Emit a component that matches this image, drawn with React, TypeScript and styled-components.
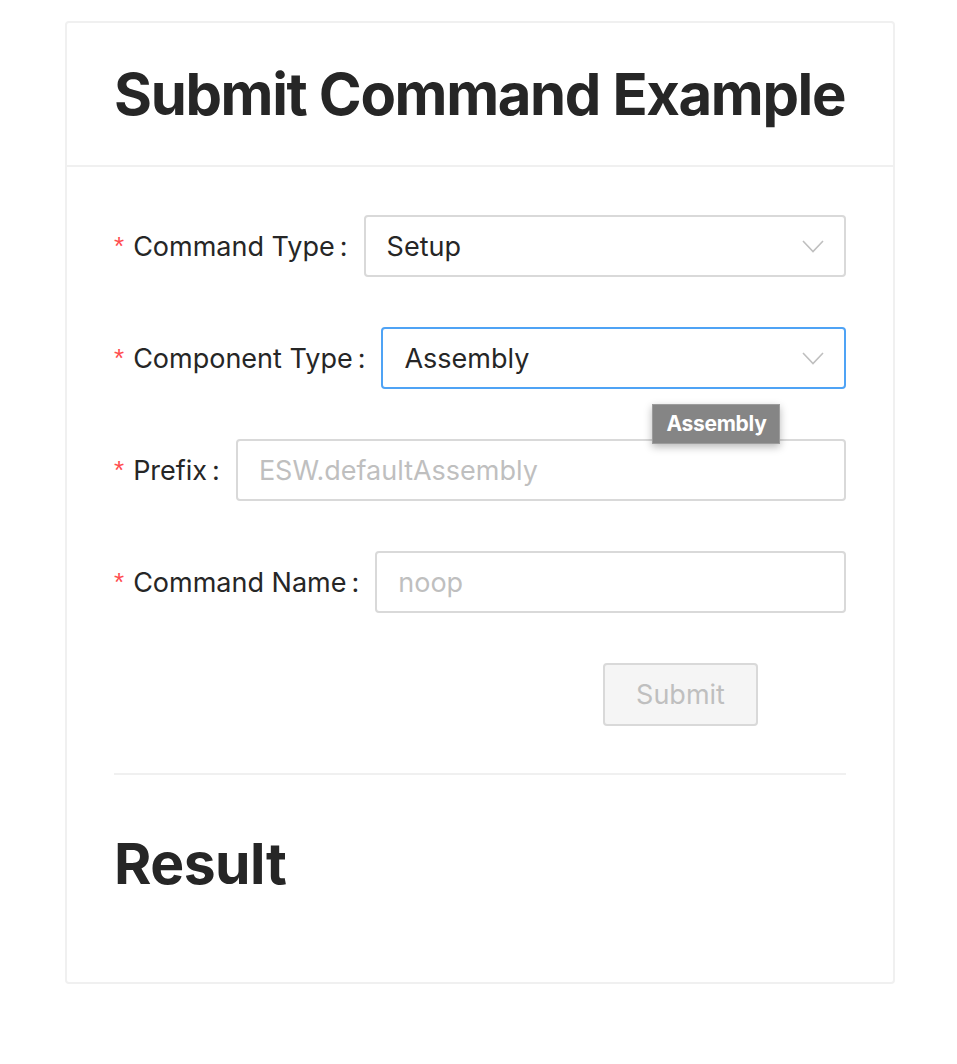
import styled, { createGlobalStyle } from "styled-components";

const GlobalStyle = createGlobalStyle`
  body {
    margin: 0;
    background: #fff;
    font-family: Inter, "Liberation Sans", sans-serif;
    color: #262626;
  }
`;

const StyledPage = styled.div`
  padding: 21px 0 40px 65px;
`;

const StyledCard = styled.div`
  width: 830px;
  box-sizing: border-box;
  border: 2px solid #f0f0f0;
  border-radius: 4px;
  background: #fff;
`;

const StyledCardHeader = styled.div`
  height: 144px;
  box-sizing: border-box;
  border-bottom: 2px solid #f0f0f0;
  padding: 0 47px;
  display: flex;
  align-items: center;
`;

const StyledTitle = styled.h1`
  margin: 0;
  font-size: 58px;
  font-weight: 700;
  letter-spacing: -1.35px;
  white-space: nowrap;
  color: #262626;
`;

const StyledCardBody = styled.div`
  padding: 48px 47px 47px;
`;

const StyledFormItem = styled.div`
  display: flex;
  align-items: center;
  height: 62px;
  margin-bottom: 50px;
`;

const StyledLabel = styled.label`
  display: flex;
  align-items: center;
  font-size: 27px;
  white-space: nowrap;
  color: #262626;

  &::before {
    content: "*";
    color: #ff4d4f;
    font-size: 26px;
    margin-right: 9px;
    font-family: "Liberation Sans", sans-serif;
  }

  &::after {
    content: ":";
    margin: 0 16px 0 5px;
  }
`;

const StyledControl = styled.div<{ $focused?: boolean }>`
  position: relative;
  flex: 1;
  height: 62px;
  box-sizing: border-box;
  border: 2px solid ${(p) => (p.$focused ? "#4fa3f5" : "#d9d9d9")};
  border-radius: 4px;
  display: flex;
  align-items: center;
  padding: 0 20px 0 21px;
  font-size: 27px;
  background: #fff;
`;

const StyledValue = styled.span<{ $placeholder?: boolean }>`
  flex: 1;
  color: ${(p) => (p.$placeholder ? "#bfbfbf" : "#262626")};
`;

const StyledArrow = styled.svg`
  width: 22px;
  height: 14px;
`;

const StyledTooltip = styled.div`
  position: absolute;
  left: 269px;
  top: 75px;
  padding: 6px 13px 7px;
  background: #858585;
  border: 1px solid #9c9c9c;
  color: #fff;
  font-size: 21px;
  font-weight: 700;
  letter-spacing: -0.3px;
  box-shadow: 0 3px 8px rgba(0, 0, 0, 0.28);
  z-index: 2;
`;

const StyledButtonRow = styled.div`
  display: flex;
  justify-content: flex-end;
  padding-right: 88px;
`;

const StyledButton = styled.button`
  width: 155px;
  height: 63px;
  box-sizing: border-box;
  border: 2px solid #d9d9d9;
  border-radius: 4px;
  background: #f5f5f5;
  color: #bfbfbf;
  font-family: inherit;
  font-size: 27px;
  cursor: not-allowed;
`;

const StyledDivider = styled.hr`
  border: none;
  border-top: 2px solid #f0f0f0;
  margin: 47px 0 51px;
`;

const StyledResult = styled.h2`
  margin: 0 0 32px;
  font-size: 57px;
  line-height: 1.35;
  font-weight: 700;
  letter-spacing: -0.5px;
  color: #262626;
`;

function Arrow() {
  return (
    <StyledArrow viewBox="0 0 22 14" fill="none">
      <polyline points="1,2 11,12.5 21,2" stroke="#bfbfbf" strokeWidth="1.6" />
    </StyledArrow>
  );
}

type Field = {
  label: string;
  value: string;
  placeholder?: boolean;
  select?: boolean;
  focused?: boolean;
  tooltip?: string;
};

const fields: Field[] = [
  { label: "Command Type", value: "Setup", select: true },
  { label: "Component Type", value: "Assembly", select: true, focused: true, tooltip: "Assembly" },
  { label: "Prefix", value: "ESW.defaultAssembly", placeholder: true },
  { label: "Command Name", value: "noop", placeholder: true },
];

export default function App() {
  return (
    <>
      <GlobalStyle />
      <StyledPage>
        <StyledCard>
          <StyledCardHeader>
            <StyledTitle>Submit Command Example</StyledTitle>
          </StyledCardHeader>
          <StyledCardBody>
            {fields.map((f) => (
              <StyledFormItem key={f.label}>
                <StyledLabel>{f.label}</StyledLabel>
                <StyledControl $focused={f.focused}>
                  <StyledValue $placeholder={f.placeholder}>{f.value}</StyledValue>
                  {f.select && <Arrow />}
                  {f.tooltip && <StyledTooltip>{f.tooltip}</StyledTooltip>}
                </StyledControl>
              </StyledFormItem>
            ))}
            <StyledButtonRow>
              <StyledButton disabled>Submit</StyledButton>
            </StyledButtonRow>
            <StyledDivider />
            <StyledResult>Result</StyledResult>
          </StyledCardBody>
        </StyledCard>
      </StyledPage>
    </>
  );
}
